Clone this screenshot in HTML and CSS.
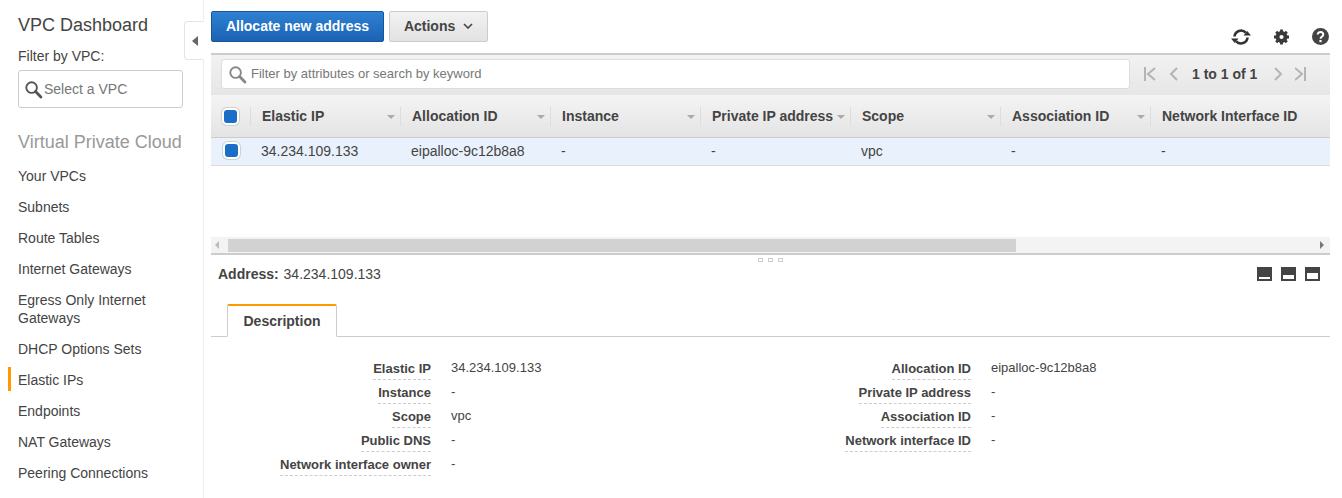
FILE: index.html
```html
<!DOCTYPE html>
<html lang="en">
<head>
    <meta charset="UTF-8">
    <title>Elastic IPs</title>
    <link rel="stylesheet" href="styles.css">
</head>
<body>
    <nav class="sidebar">
        <h2 class="side-title">VPC Dashboard</h2>
        <label class="filter-label">Filter by VPC:</label>
        <div class="vpc-select">
            <svg class="search-icon" width="19" height="19" viewBox="0 0 20 20"><circle cx="8" cy="8" r="5.6" fill="none" stroke="#555" stroke-width="2"/><path d="M12.2 12.2l5.600 5.600" stroke="#555" stroke-width="3" stroke-linecap="round"/></svg>
            <span>Select a VPC</span>
        </div>
        <h2 class="side-section">Virtual Private Cloud</h2>
        <ul class="side-list">
            <li>Your VPCs</li>
            <li>Subnets</li>
            <li>Route Tables</li>
            <li>Internet Gateways</li>
            <li class="two-line">Egress Only Internet Gateways</li>
            <li>DHCP Options Sets</li>
            <li class="active">Elastic IPs</li>
            <li>Endpoints</li>
            <li>NAT Gateways</li>
            <li>Peering Connections</li>
        </ul>
        <div class="collapse-tab"><span class="collapse-arrow"></span></div>
    </nav>

    <main class="main">
        <div class="toolbar">
            <button class="btn btn-primary">Allocate new address</button>
            <button class="btn btn-default">Actions <svg class="caret" width="10" height="6" viewBox="0 0 10 6"><path d="M1 1l4 4 4-4" fill="none" stroke="#444" stroke-width="1.6"/></svg></button>
            <div class="tool-icons">
                <svg width="20" height="16" viewBox="0 0 20 16"><path d="M3.500 7.500A6.500 6.500 0 0 1 14.800 3.700M16.500 8.500A6.500 6.500 0 0 1 5.200 12.300" fill="none" stroke="#333" stroke-width="2.600"/><path d="M12.500 6.500h7.500l-3.750-4.600zM7.500 9.500H0l3.750 4.600z" fill="#333"/></svg>
                <svg width="15" height="16" viewBox="0 0 16 16"><circle cx="8" cy="8" r="4.400" fill="none" stroke="#3a3a3a" stroke-width="4"/><path d="M8 0v16M0 8h16M2.300 2.300l11.400 11.400M13.700 2.300L2.300 13.700" stroke="#3a3a3a" stroke-width="3"/><circle cx="8" cy="8" r="2.200" fill="#fff"/></svg>
                <svg width="17" height="17" viewBox="0 0 17 17"><circle cx="8.500" cy="8.500" r="8.500" fill="#444"/><path d="M5.700 6.500a2.800 2.500 0 1 1 4.400 2c-1 .7-1.600 1.100-1.600 2.300" fill="none" stroke="#fff" stroke-width="2"/><rect x="7.400" y="12" width="2.200" height="2.200" fill="#fff"/></svg>
            </div>
        </div>

        <div class="filter-bar">
            <div class="filter-input">
                <svg width="19" height="19" viewBox="0 0 20 20"><circle cx="8" cy="8" r="5.600" fill="none" stroke="#888" stroke-width="2"/><path d="M12.200 12.200l5.600 5.600" stroke="#888" stroke-width="3" stroke-linecap="round"/></svg>
                <span class="filter-text">Filter by attributes or search by keyword</span>
            </div>
            <div class="pager">
                <svg width="13" height="14" viewBox="0 0 13 14"><path d="M1 0v14M11 1L4 7l7 6" fill="none" stroke="#b4b4b4" stroke-width="2"/></svg>
                <svg width="9" height="14" viewBox="0 0 9 14"><path d="M8 1L2 7l6 6" fill="none" stroke="#b4b4b4" stroke-width="2"/></svg>
                <span class="pager-text">1 to 1 of 1</span>
                <svg width="9" height="14" viewBox="0 0 9 14"><path d="M1 1l6 6-6 6" fill="none" stroke="#b4b4b4" stroke-width="2"/></svg>
                <svg width="11" height="14" viewBox="0 0 11 14"><path d="M10 0v14M0 1l7 6-7 6" fill="none" stroke="#b4b4b4" stroke-width="2"/></svg>
            </div>
        </div>

        <div class="table">
            <div class="table-head">
                <div class="check-cell"><span class="check"></span></div>
                <div class="th">Elastic IP</div>
                <div class="th">Allocation ID</div>
                <div class="th">Instance</div>
                <div class="th">Private IP address</div>
                <div class="th">Scope</div>
                <div class="th">Association ID</div>
                <div class="th th-last">Network Interface ID</div>
            </div>
            <div class="table-row">
                <div class="check-cell check-cell-row"><span class="check"></span></div>
                <div class="td">34.234.109.133</div>
                <div class="td">eipalloc-9c12b8a8</div>
                <div class="td">-</div>
                <div class="td">-</div>
                <div class="td">vpc</div>
                <div class="td">-</div>
                <div class="td">-</div>
            </div>
        </div>

        <div class="scrollbar">
            <span class="arrow-left"></span>
            <div class="scroll-track"><div class="scroll-thumb"></div></div>
            <span class="arrow-right"></span>
        </div>

        <div class="split-handle"><i></i><i></i><i></i></div>

        <div class="address-bar">
            <div><b>Address:</b> <span class="address-value">34.234.109.133</span></div>
            <div class="pane-icons">
                <span class="pane pane-small"></span>
                <span class="pane pane-medium"></span>
                <span class="pane pane-large"></span>
            </div>
        </div>

        <div class="tabs"><div class="tab">Description</div></div>

        <div class="details">
            <dl class="detail-col">
                <div class="detail-row"><dt><span>Elastic IP</span></dt><dd>34.234.109.133</dd></div>
                <div class="detail-row"><dt><span>Instance</span></dt><dd>-</dd></div>
                <div class="detail-row"><dt><span>Scope</span></dt><dd>vpc</dd></div>
                <div class="detail-row"><dt><span>Public DNS</span></dt><dd>-</dd></div>
                <div class="detail-row"><dt><span>Network interface owner</span></dt><dd>-</dd></div>
            </dl>
            <dl class="detail-col">
                <div class="detail-row"><dt><span>Allocation ID</span></dt><dd>eipalloc-9c12b8a8</dd></div>
                <div class="detail-row"><dt><span>Private IP address</span></dt><dd>-</dd></div>
                <div class="detail-row"><dt><span>Association ID</span></dt><dd>-</dd></div>
                <div class="detail-row"><dt><span>Network interface ID</span></dt><dd>-</dd></div>
            </dl>
        </div>
    </main>
</body>
</html>
```
FILE: styles.css
```css
html, body {
    height: 100%;
    margin: 0;
}
body {
    font-family: "Liberation Sans", Arial, sans-serif;
    font-size: 14px;
    color: #444;
    background-color: #fff;
    display: flex;
    overflow: hidden;
}
.sidebar {
    position: relative;
    flex: none;
    width: 204px;
    box-sizing: border-box;
    padding: 15px 0 0 18px;
    border-right: 1px solid #eee;
}
.side-title {
    margin: 0;
    font-size: 18px;
    font-weight: normal;
    line-height: 20px;
}
.filter-label {
    display: block;
    margin-top: 12px;
    line-height: 18px;
}
.vpc-select {
    display: flex;
    align-items: center;
    gap: 1px;
    width: 165px;
    height: 38px;
    margin-top: 5px;
    box-sizing: border-box;
    padding-left: 5px;
    border: 1px solid #ccc;
    border-radius: 3px;
    color: #777;
}
.side-section {
    margin: 24px 0 0;
    font-size: 18px;
    font-weight: normal;
    line-height: 20px;
    color: #999;
}
.side-list {
    list-style: none;
    margin: 15px 0 0;
    padding: 0;
}
.side-list li {
    position: relative;
    line-height: 18px;
    margin-bottom: 13px;
}
.side-list .two-line {
    width: 150px;
}
.side-list .active::before {
    content: "";
    position: absolute;
    left: -10px;
    top: -4px;
    width: 3px;
    height: 24px;
    background-color: #f90;
}
.collapse-tab {
    position: absolute;
    top: 21px;
    right: -1px;
    width: 20px;
    height: 39px;
    box-sizing: border-box;
    border: 1px solid #e4e4e4;
    border-right: 1px solid #fff;
    border-radius: 4px 0 0 4px;
    background-color: #fff;
}
.collapse-arrow {
    position: absolute;
    top: 14px;
    left: 7px;
    border-style: solid;
    border-width: 5px 6px 5px 0;
    border-color: transparent #666 transparent transparent;
}

.main {
    flex: none;
    width: 1119px;
    margin-left: 7px;
}
.toolbar {
    display: flex;
    align-items: flex-start;
    gap: 5px;
    height: 53px;
    box-sizing: border-box;
    padding-top: 11px;
}
.btn {
    height: 31px;
    padding: 0 0 2px;
    font-family: inherit;
    font-size: 14px;
    font-weight: bold;
    border-radius: 2px;
    white-space: nowrap;
}
.btn-primary {
    width: 173px;
    color: #fff;
    border: 1px solid #15569b;
    background: linear-gradient(#2f81d3, #1a62b4);
}
.btn-default {
    width: 99px;
    color: #444;
    border: 1px solid #ccc;
    background: linear-gradient(#f2f2f2, #e2e2e2);
}
.caret {
    margin-left: 4px;
    vertical-align: 2px;
}
.tool-icons {
    margin-left: auto;
    display: flex;
    align-items: center;
    gap: 23px;
    padding: 17px 0 0;
    margin-right: 1px;
}
.filter-bar {
    display: flex;
    align-items: center;
    height: 42px;
    box-sizing: border-box;
    padding: 0 0 2px 10px;
    border-top: 2px solid #ccc;
    background: linear-gradient(#f2f2f2, #e6e6e6);
}
.filter-input {
    display: flex;
    align-items: center;
    gap: 4px;
    width: 909px;
    height: 30px;
    box-sizing: border-box;
    padding-left: 6px;
    background-color: #fff;
    border: 1px solid #ddd;
    border-radius: 3px;
    color: #777;
    font-size: 13px;
}
.filter-text {
    padding-bottom: 2px;
}
.pager {
    display: flex;
    align-items: center;
    gap: 12px;
    margin-left: 14px;
    font-weight: bold;
    font-size: 14px;
}
.pager-text {
    margin: 0 5px 0 2px;
}
.table {
    height: 142px;
    overflow: hidden;
}
.table-head {
    display: flex;
    height: 43px;
    box-sizing: border-box;
    border-bottom: 1px solid #ccc;
    background: linear-gradient(#f4f4f4, #e4e4e4);
    align-items: center;
}
.table-row {
    display: flex;
    height: 28px;
    box-sizing: border-box;
    padding-bottom: 2px;
    border-bottom: 1px solid #ddd;
    background-color: #e9f1fc;
    align-items: center;
}
.check-cell {
    flex: none;
    width: 39px;
    box-sizing: border-box;
    padding-left: 13px;
}
.check-cell-row {
    padding-left: 14px;
}
.check {
    display: block;
    width: 13px;
    height: 13px;
    border-radius: 3px;
    background-color: #1a6ec7;
    box-shadow: 0 0 0 2px #fff, 0 0 0 3px #d0d0d0;
}
.th {
    position: relative;
    flex: none;
    width: 150px;
    box-sizing: border-box;
    padding-left: 11px;
    line-height: 19px;
    font-weight: bold;
    border-left: 1px solid #ddd;
}
.th::after {
    content: "";
    position: absolute;
    right: 5px;
    top: 8px;
    border-style: solid;
    border-width: 4px 4px 0;
    border-color: #aaa transparent transparent;
}
.th-last {
    width: 148px;
    white-space: nowrap;
}
.th-last::after {
    display: none;
}
.td {
    flex: none;
    width: 150px;
    box-sizing: border-box;
    padding-left: 11px;
}
.scrollbar {
    display: flex;
    align-items: center;
    height: 18px;
    box-sizing: border-box;
    background-color: #f3f3f3;
    border-bottom: 2px solid #ccc;
}
.arrow-left, .arrow-right {
    flex: none;
    width: 0;
    height: 0;
    border-style: solid;
}
.arrow-left {
    margin: 0 9px 0 4px;
    border-width: 4px 4px 4px 0;
    border-color: transparent #bbb transparent transparent;
}
.arrow-right {
    margin: 0 6px;
    border-width: 4px 0 4px 4px;
    border-color: transparent transparent transparent #777;
}
.scroll-track {
    flex: 1;
}
.scroll-thumb {
    width: 788px;
    height: 13px;
    background-color: #d2d2d2;
}
.split-handle {
    display: flex;
    justify-content: center;
    gap: 5px;
    height: 6px;
    padding-top: 3px;
}
.split-handle i {
    display: block;
    width: 5px;
    height: 4px;
    box-sizing: border-box;
    border: 1px solid #ccc;
}
.address-bar {
    display: flex;
    justify-content: space-between;
    align-items: center;
    height: 18px;
    margin-top: 1px;
    padding: 0 10px 0 7px;
    line-height: 18px;
}
.address-value {
    margin-left: 1px;
}
.pane-icons {
    display: flex;
    gap: 9px;
}
.pane {
    position: relative;
    display: block;
    width: 15px;
    height: 14px;
    background-color: #444;
}
.pane::after {
    content: "";
    position: absolute;
    left: 2px;
    right: 2px;
    bottom: 2px;
    background-color: #fff;
}
.pane-small::after { height: 2px; }
.pane-medium::after { height: 4px; }
.pane-large::after { height: 6px; }
.tabs {
    display: flex;
    height: 32px;
    margin-top: 21px;
    padding-left: 16px;
    border-bottom: 1px solid #ccc;
}
.tab {
    width: 110px;
    height: 33px;
    box-sizing: border-box;
    border: 1px solid #ccc;
    border-top: 2px solid #f90;
    border-bottom: 1px solid #fff;
    border-radius: 2px 2px 0 0;
    background-color: #fff;
    text-align: center;
    font-weight: bold;
    line-height: 30px;
}
.details {
    display: flex;
    padding-top: 20px;
}
.detail-col {
    flex: none;
    width: 540px;
    margin: 0;
}
.detail-row {
    display: flex;
    height: 24px;
}
.detail-row dt {
    flex: none;
    width: 220px;
    text-align: right;
    font-size: 13px;
    font-weight: bold;
}
.detail-row dt span {
    display: inline-block;
    height: 23px;
    line-height: 24px;
    border-bottom: 1px dashed #ccc;
    box-sizing: border-box;
}
.detail-row dd {
    margin: 0 0 0 20px;
    font-size: 13px;
    line-height: 22px;
}
```
